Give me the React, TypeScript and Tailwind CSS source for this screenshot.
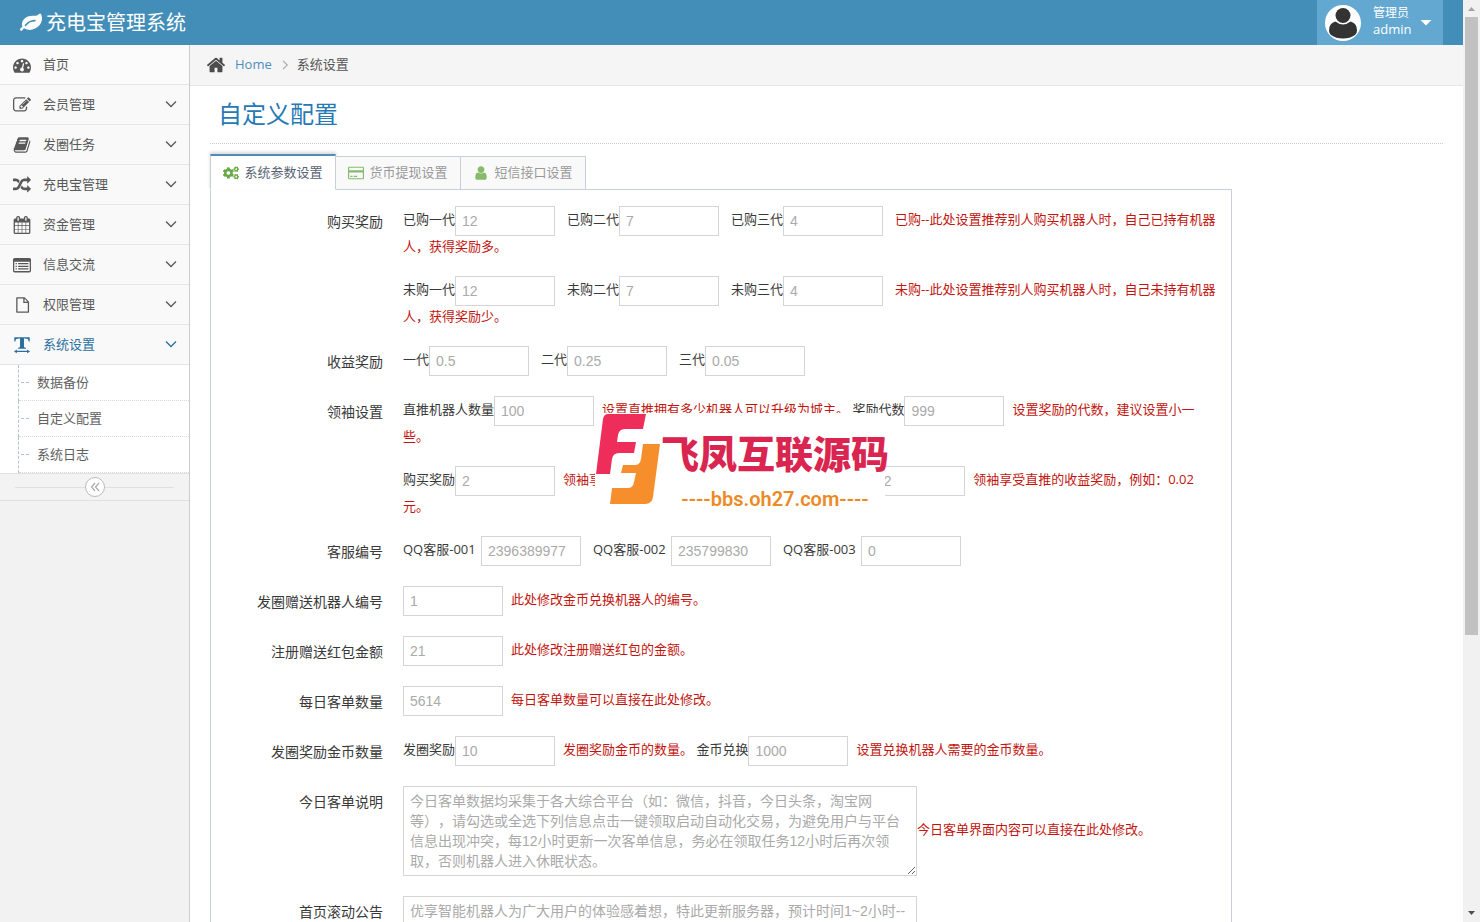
import { useState, type ReactNode } from 'react';
import { FaCogs } from 'react-icons/fa';

const ICONS = {
  dashboard:
    'M384 1152q0-53-37.5-90.5t-90.5-37.5-90.5 37.5-37.5 90.5 37.5 90.5 90.5 37.5 90.5-37.5 37.5-90.5zm192-448q0-53-37.5-90.5t-90.5-37.5-90.5 37.5-37.5 90.5 37.5 90.5 90.5 37.5 90.5-37.5 37.5-90.5zm428 481l101-382q6-26-7.5-48.5t-38.5-29.5-48 6.5-30 39.5l-101 382q-60 5-107 43.5t-63 98.5q-20 77 20 146t117 89 146-20 89-117q16-60-6-117t-72-91zm660-33q0-53-37.5-90.5t-90.5-37.5-90.5 37.5-37.5 90.5 37.5 90.5 90.5 37.5 90.5-37.5 37.5-90.5zm-640-640q0-53-37.5-90.5t-90.5-37.5-90.5 37.5-37.5 90.5 37.5 90.5 90.5 37.5 90.5-37.5 37.5-90.5zm448 192q0-53-37.5-90.5t-90.5-37.5-90.5 37.5-37.5 90.5 37.5 90.5 90.5 37.5 90.5-37.5 37.5-90.5zm320 448q0 261-141 483-19 29-54 29h-1402q-35 0-54-29-141-221-141-483 0-182 71-348t191-286 286-191 348-71 348 71 286 191 191 286 71 348z',
  edit:
    'M888 1184l116-116-152-152-116 116v56h96v96h56zm440-720q-16-16-33 1l-350 350q-17 17-1 33t33-1l350-350q17-17 1-33zm80 594v190q0 119-84.5 203.5t-203.5 84.5h-832q-119 0-203.5-84.5t-84.5-203.5v-832q0-119 84.5-203.5t203.5-84.5h832q63 0 117 25 15 7 18 23 3 17-9 29l-49 49q-14 14-32 8-23-6-45-6h-832q-66 0-113 47t-47 113v832q0 66 47 113t113 47h832q66 0 113-47t47-113v-126q0-13 9-22l64-64q15-15 35-7t20 29zm-96-738l288 288-672 672h-288v-288zm444 132l-92 92-288-288 92-92q28-28 68-28t68 28l152 152q28 28 28 68t-28 68z',
  book:
    'M1703 478q40 57 18 129l-275 906q-19 64-76.5 107.5t-122.5 43.5h-923q-77 0-148.5-53.5t-99.5-131.5q-24-67-2-127 0-4 3-27t4-37q1-8-3-21.5t-3-19.5q2-11 8-21t16.5-23.5 16.5-23.5q23-38 45-91.5t30-91.5q3-10 .5-30t-.5-28q3-11 17-28t17-23q21-36 42-92t25-90q1-9-2.5-32t.5-28q4-13 22-30.5t22-22.5q19-26 42.5-84.5t27.5-96.5q1-8-3-25.5t-2-26.5q2-8 9-18t18-23 17-21q8-12 16.5-30.5t15-35 16-36 19.5-32 26.5-23.5 36-11.5 47.5 5.5l-1 3q38-9 51-9h761q74 0 114 56t18 130l-274 906q-36 119-71.5 153.5t-128.5 34.5h-869q-27 0-38 15-11 16-1 43 24 70 144 70h923q29 0 56-15.5t35-41.5l300-987q7-22 5-57 38 15 59 43zm-1064 2q-4 13 2 22.5t20 9.5h608q13 0 25.5-9.5t16.5-22.5l21-64q4-13-2-22.5t-20-9.5h-608q-13 0-25.5 9.5t-16.5 22.5zm-83 256q-4 13 2 22.5t20 9.5h608q13 0 25.5-9.5t16.5-22.5l21-64q4-13-2-22.5t-20-9.5h-608q-13 0-25.5 9.5t-16.5 22.5z',
  random:
    'M666 481q-60 92-137 273-22-45-37-72.5t-40.5-63.5-51-56.5-63-35-81.5-14.5h-224q-14 0-23-9t-9-23v-192q0-14 9-23t23-9h224q250 0 410 225zm1126 799q0 14-9 23l-320 320q-9 9-23 9-13 0-22.5-9.5t-9.5-22.5v-192q-32 0-85 .5t-81 1-73-1-71-5-64-10.5-63-18.5-58-28.5-59-40-55-53.5-56-69.5q59-93 136-273 22 45 37 72.5t40.5 63.5 51 56.5 63 35 81.5 14.5h256v-192q0-14 9-23t23-9q12 0 24 10l319 319q9 9 9 23zm0-896q0 14-9 23l-320 320q-9 9-23 9-13 0-22.5-9.5t-9.5-22.5v-192h-256q-48 0-87 15t-69 45-51 61.5-45 77.5q-32 62-78 171-29 66-49.5 111t-54 105-64 100-74 83-90 68.5-106.5 42-128 16.5h-224q-14 0-23-9t-9-23v-192q0-14 9-23t23-9h224q48 0 87-15t69-45 51-61.5 45-77.5q32-62 78-171 29-66 49.5-111t54-105 64-100 74-83 90-68.5 106.5-42 128-16.5h256v-192q0-14 9-23t23-9q12 0 24 10l319 319q9 9 9 23z',
  calendar:
    'M192 1664h288v-288h-288v288zm352 0h320v-288h-320v288zm-352-352h288v-320h-288v320zm352 0h320v-320h-320v320zm-352-384h288v-288h-288v288zm736 736h320v-288h-320v288zm-384-736h320v-288h-320v288zm768 736h288v-288h-288v288zm-384-352h320v-320h-320v320zm-352-864v-288q0-13-9.5-22.5t-22.5-9.5h-64q-13 0-22.5 9.5t-9.5 22.5v288q0 13 9.5 22.5t22.5 9.5h64q13 0 22.5-9.5t9.5-22.5zm736 864h288v-320h-288v320zm-384-384h320v-288h-320v288zm384 0h288v-288h-288v288zm32-480v-288q0-13-9.5-22.5t-22.5-9.5h-64q-13 0-22.5 9.5t-9.5 22.5v288q0 13 9.5 22.5t22.5 9.5h64q13 0 22.5-9.5t9.5-22.5zm384-64v1280q0 52-38 90t-90 38h-1408q-52 0-90-38t-38-90v-1280q0-52 38-90t90-38h128v-96q0-66 47-113t113-47h64q66 0 113 47t47 113v96h384v-96q0-66 47-113t113-47h64q66 0 113 47t47 113v96h128q52 0 90 38t38 90z',
  list:
    'M160 192h1472q66 0 113 47t47 113v1120q0 66-47 113t-113 47h-1472q-66 0-113-47t-47-113v-1120q0-66 47-113t113-47zm-32 384v896q0 32 32 32h1472q32 0 32-32v-896zm128 128h128v128h-128zm256 0h1024v128h-1024zm-256 256h128v128h-128zm256 0h1024v128h-1024zm-256 256h128v128h-128zm256 0h1024v128h-1024z',
  file:
    'M384 128h768l448 448v1024q0 64-64 64h-1152q-64 0-64-64v-1408q0-64 64-64zm64 128v1280h1024v-832h-448v-448zm704 28v292h292z',
  textWidth:
    'M128 128h1536v420h-110q-20-210-100-250t-260-40h-100v820q0 80 190 90v100h-776v-100q190-10 190-90v-820h-100q-180 0-260 40t-100 250h-110zM384 1344v124h1024v-124l288 188-288 188v-124h-1024v124l-288-188z',
  leaf:
    'M1280 704q0-26-19-45t-45-19q-172 0-318 49.5t-259.5 134-235.5 219.5q-19 21-19 45 0 26 19 45t45 19q24 0 45-19 27-24 74-71t67-66q137-124 268.5-176t313.5-52q26 0 45-19t19-45zm512-198q0 95-20 193-46 224-184.5 383t-357.5 268q-214 108-438 108-148 0-286-47-15-5-88-42t-96-37q-16 0-39.5 32t-45 70-52.5 70-60 32q-43 0-63.5-17.5t-45.5-59.5q-2-4-6-11t-5.5-10-3-9.5-1.5-13.5q0-35 31-73.5t68-65.5 68-56 31-48q0-4-14-38t-16-44q-9-51-9-104 0-115 43.5-220t119-184.5 170.5-139 204-95.5q55-18 145-25.5t179.5-9 178.5-6 163.5-24 113.5-56.5l29.5-29.5 29.5-28 27-20 36.5-16 43.5-4.5q39 0 70.5 46t47.5 112 24 124 8 96z',
  home:
    'M1472 992v480q0 26-19 45t-45 19h-384v-384h-256v384h-384q-26 0-45-19t-19-45v-480q0-1 .5-3t.5-3l575-474 575 474q1 2 1 6zm223-69l-62 74q-8 9-21 11h-3q-13 0-21-7l-692-577-692 577q-12 8-24 7-13-2-21-11l-62-74q-8-10-7-23.5t11-21.5l719-599q32-26 76-26t76 26l244 204v-195q0-14 9-23t23-9h192q14 0 23 9t9 23v408l219 182q10 8 11 21.5t-7 23.5z',
  card:
    'M128 192h1536q128 0 128 128v1152q0 128-128 128h-1536q-128 0-128-128v-1152q0-128 128-128zm0 128v256h1536v-256zm0 512v640h1536v-640zm128 384h256v128h-256zm384 0h384v128h-384z',
  user:
    'M1536 1399q0 109-62.5 187t-150.5 78h-854q-88 0-150.5-78t-62.5-187q0-85 8.5-160.5t31.5-152 58.5-131 94-89 134.5-34.5q131 128 313 128t313-128q76 0 134.5 34.5t94 89 58.5 131 31.5 152 8.5 160.5zm-256-887q0 159-112.5 271.5t-271.5 112.5-271.5-112.5-112.5-271.5 112.5-271.5 271.5-112.5 271.5 112.5 112.5 271.5z',
};

function Icon({ name, className }: { name: keyof typeof ICONS; className: string }) {
  return (
    <svg viewBox="0 0 1792 1792" className={className} fill="currentColor" fillRule="evenodd" aria-hidden="true">
      <path d={ICONS[name]} />
    </svg>
  );
}

function Chevron({ className }: { className: string }) {
  return (
    <svg viewBox="0 0 12 12" className={className} fill="none" stroke="currentColor" strokeWidth="1.3" aria-hidden="true">
      <path d="M1 2.500l5 5 5-5" />
    </svg>
  );
}

const MENU: { icon: keyof typeof ICONS; label: string }[] = [
  { icon: 'edit', label: '会员管理' },
  { icon: 'book', label: '发圈任务' },
  { icon: 'random', label: '充电宝管理' },
  { icon: 'calendar', label: '资金管理' },
  { icon: 'list', label: '信息交流' },
  { icon: 'file', label: '权限管理' },
];

const SUBMENU = ['数据备份', '自定义配置', '系统日志'];

function Header() {
  return (
    <header className="flex h-[45px] shrink-0 justify-between bg-[#438eb9] pr-5 pl-5 text-white">
      <a href="#" className="flex items-center gap-1 text-xl">
        <Icon name="leaf" className="size-[22px]" />
        充电宝管理系统
      </a>
      <button type="button" className="flex w-[126px] items-center bg-[#62a8d1] pl-2 text-left">
        <svg viewBox="0 0 36 36" className="size-9" aria-hidden="true">
          <circle cx="18" cy="18" r="18" fill="#fff" />
          <circle cx="18" cy="10.500" r="7.500" fill="#333" />
          <path d="M10.500 16.500q7.500 6 15 0q6.500 1.500 6.500 9 0 3-2 4.500-5 3.500-12 3.500t-12-3.500q-2-1.500-2-4.500 0-7.500 6.500-9z" fill="#333" />
        </svg>
        <span className="ml-3 flex w-[39px] flex-col pb-[3px] text-[13px] leading-4">
          <small className="text-xs leading-4">管理员</small>
          admin
        </span>
        <svg viewBox="0 0 12 6" className="ml-2 h-[6px] w-3" fill="#fff" aria-hidden="true">
          <path d="M0.500 0h11l-5.500 5.500z" />
        </svg>
      </button>
    </header>
  );
}

function Sidebar() {
  return (
    <aside className="w-[190px] shrink-0 border-r border-[#ccc] bg-[#f2f2f2] text-[13px] text-[#585858]">
      <nav>
        <a href="#" className="flex h-10 items-center gap-3 border-b border-[#e5e5e5] bg-[#fbfbfb] pl-[13px]">
          <Icon name="dashboard" className="size-[18px]" />
          首页
        </a>
        {MENU.map((item) => (
          <a key={item.label} href="#" className="flex h-10 items-center gap-3 border-b border-[#e5e5e5] bg-[#f9f9f9] pr-3 pl-[13px]">
            <Icon name={item.icon} className="size-[18px]" />
            <span className="flex-1">{item.label}</span>
            <Chevron className="size-3" />
          </a>
        ))}
        <a href="#" className="flex h-10 items-center gap-3 border-b border-[#e5e5e5] bg-[#f9f9f9] pr-3 pl-[13px] text-[#2b6f9f]">
          <Icon name="textWidth" className="size-[18px]" />
          <span className="flex-1">系统设置</span>
          <Chevron className="size-3" />
        </a>
        <ul className="bg-white pl-[18px]">
          {SUBMENU.map((label) => (
            <li key={label} className="border-l border-dashed border-[#b4c4cf]">
              <a href="#" className="flex h-9 items-center gap-2 border-b border-dotted border-[#d5d9dc] pl-[2px] text-[#616161]">
                <span className="w-2 border-t border-dashed border-[#b4c4cf]" />
                {label}
              </a>
            </li>
          ))}
        </ul>
      </nav>
      <div className="flex h-7 items-center border-y border-[#e0e0e0] bg-[#f3f3f3] px-[15px]">
        <span className="flex-1 border-t border-[#e0e0e0]" />
        <button type="button" aria-label="收起菜单" className="flex size-5 items-center justify-center rounded-full border border-[#bbb] bg-white text-[#aaa]">
          <svg viewBox="0 0 10 10" className="size-[10px]" fill="none" stroke="currentColor" strokeWidth="1.2">
            <path d="M5 1L1.500 5 5 9M9 1L5.500 5 9 9" />
          </svg>
        </button>
        <span className="flex-1 border-t border-[#e0e0e0]" />
      </div>
    </aside>
  );
}

function Row({ label, children }: { label?: string; children: ReactNode }) {
  return (
    <div className="mb-5 flex">
      <div className="w-40 shrink-0 pt-[6px] text-right text-sm leading-5">{label}</div>
      <div className="ml-5 flex-1 text-[13px] leading-5">{children}</div>
    </div>
  );
}

function Field({ label, value, name, last }: { label?: string; value: string; name: string; last?: boolean }) {
  return (
    <>
      {label && (
        <label htmlFor={name} className={label.startsWith('QQ') ? 'inline-block w-[78px]' : undefined}>
          {label}
        </label>
      )}
      <input
        id={name}
        type="text"
        aria-label={label ? undefined : name}
        defaultValue={value}
        className={`inline-block h-[30px] w-[100px] border border-[#d5d5d5] bg-white px-[6px] align-middle font-[Liberation_Sans,sans-serif] text-sm text-[#aaa] ${last ? 'mr-2' : 'mr-3'}`}
      />
    </>
  );
}

function Hint({ children }: { children: ReactNode }) {
  return <span className="text-[#c2150f]">{children}</span>;
}

const AREA =
  'block h-[90px] w-[514px] shrink-0 resize border border-[#d5d5d5] bg-white px-[6px] py-1 font-[Liberation_Sans,Noto_Sans_CJK_SC,sans-serif] text-sm leading-5 text-[#aaa] [text-spacing-trim:space-all]';

function ConfigForm() {
  return (
    <form className="border border-[#c5d0dc] pt-4 pr-3 pl-3 text-[#393939]">
      <Row label="购买奖励">
        <Field name="bought1" label="已购一代" value="12" />
        <Field name="bought2" label="已购二代" value="7" />
        <Field name="bought3" label="已购三代" value="4" />
        <Hint>已购--此处设置推荐别人购买机器人时，自己已持有机器人，获得奖励多。</Hint>
      </Row>
      <Row>
        <Field name="unbought1" label="未购一代" value="12" />
        <Field name="unbought2" label="未购二代" value="7" />
        <Field name="unbought3" label="未购三代" value="4" />
        <Hint>未购--此处设置推荐别人购买机器人时，自己未持有机器人，获得奖励少。</Hint>
      </Row>
      <Row label="收益奖励">
        <Field name="income1" label="一代" value="0.5" />
        <Field name="income2" label="二代" value="0.25" />
        <Field name="income3" label="三代" value="0.05" />
      </Row>
      <div className="relative">
        <Row label="领袖设置">
          <Field name="robots" label="直推机器人数量" value="100" last />
          <Hint>设置直推拥有多少机器人可以升级为城主。</Hint>{' '}
          <Field name="levels" label="奖励代数" value="999" last />
          <Hint>设置奖励的代数，建议设置小一些。</Hint>
        </Row>
        <Row>
          <Field name="buyReward" label="购买奖励" value="2" last />
          <Hint>领袖享受直推的购买奖励，例如：0.02元。</Hint>{' '}
          <Field name="incomeReward" label="收益奖励" value="0.2" last />
          <Hint>领袖享受直推的收益奖励，例如：0.02元。</Hint>
        </Row>
        <Stamp />
      </div>
      <Row label="客服编号">
        <Field name="qq1" label="QQ客服-001" value="2396389977" />
        <Field name="qq2" label="QQ客服-002" value="235799830" />
        <Field name="qq3" label="QQ客服-003" value="0" />
      </Row>
      <Row label="发圈赠送机器人编号">
        <Field name="giftRobot" value="1" last />
        <Hint>此处修改金币兑换机器人的编号。</Hint>
      </Row>
      <Row label="注册赠送红包金额">
        <Field name="giftMoney" value="21" last />
        <Hint>此处修改注册赠送红包的金额。</Hint>
      </Row>
      <Row label="每日客单数量">
        <Field name="daily" value="5614" last />
        <Hint>每日客单数量可以直接在此处修改。</Hint>
      </Row>
      <Row label="发圈奖励金币数量">
        <Field name="postReward" label="发圈奖励" value="10" last />
        <Hint>发圈奖励金币的数量。</Hint>{' '}
        <Field name="exchange" label="金币兑换" value="1000" last />
        <Hint>设置兑换机器人需要的金币数量。</Hint>
      </Row>
      <Row label="今日客单说明">
        <div className="flex items-center">
          <textarea
            aria-label="今日客单说明"
            className={AREA}
            defaultValue="今日客单数据均采集于各大综合平台（如：微信，抖音，今日头条，淘宝网等），请勾选或全选下列信息点击一键领取启动自动化交易，为避免用户与平台信息出现冲突，每12小时更新一次客单信息，务必在领取任务12小时后再次领取，否则机器人进入休眠状态。"
          />
          <p className="pb-1">
            <Hint>今日客单界面内容可以直接在此处修改。</Hint>
          </p>
        </div>
      </Row>
      <Row label="首页滚动公告">
        <textarea
          aria-label="首页滚动公告"
          className={AREA}
          defaultValue="优享智能机器人为广大用户的体验感着想，特此更新服务器，预计时间1~2小时--"
        />
      </Row>
    </form>
  );
}

// Site stamp laid over the middle of the form
function Stamp() {
  return (
    <div className="absolute top-[17px] left-[372px] flex h-[100px] w-[290px] bg-white">
      <svg viewBox="0 0 66 94" className="h-[94px] w-[66px] shrink-0" aria-hidden="true">
        <path d="M13 1h38l-3 15H30q-6 0-7 6l-1 7h19l-2 11H24q-6 0-7 6l-2 15H1L8 6q1-5 5-5z" fill="#ee2d5b" />
        <path d="M48 31h17l-7 53q-1 7-8 7H15l2-16h16q5 0 6-6l2-9H26l2-8h12q5 0 6-6z" fill="#f68e2c" />
      </svg>
      <div className="flex flex-1 flex-col items-center">
        <strong className="pt-1 font-[Noto_Sans_CJK_SC,sans-serif] text-[38px] leading-[70px] font-black whitespace-nowrap text-[#d9254f]">
          飞凤互联源码
        </strong>
        <span className="font-[Roboto,sans-serif] text-xl leading-6 font-semibold whitespace-nowrap text-[#ec8a26]">
          ----bbs.oh27.com----
        </span>
      </div>
    </div>
  );
}

const TABS = [
  { label: '系统参数设置', icon: <FaCogs className="size-4" /> },
  { label: '货币提现设置', icon: <Icon name="card" className="size-4" /> },
  { label: '短信接口设置', icon: <Icon name="user" className="size-4" /> },
];

function Tabs() {
  const [active, setActive] = useState(0);
  return (
    <div role="tablist" className="relative z-10 -mb-px flex items-end">
      {TABS.map((tab, i) => (
        <button
          key={tab.label}
          type="button"
          role="tab"
          aria-selected={i === active}
          onClick={() => setActive(i)}
          className={
            i === active
              ? 'flex h-9 w-[126px] items-center justify-center gap-[5px] border border-t-2 border-[#c5d0dc] border-t-[#4c8fbd] border-b-white bg-white text-[13px] text-[#576373] shadow-[0_-2px_3px_0_rgba(0,0,0,0.15)]'
              : 'flex h-[34px] w-[125px] items-center justify-center gap-[5px] border border-l-0 border-[#c5d0dc] bg-[#f9f9f9] text-[13px] text-[#999]'
          }
        >
          <span className={i === active ? 'text-[#69aa46]' : 'text-[#87bb6b]'}>{tab.icon}</span>
          {tab.label}
        </button>
      ))}
    </div>
  );
}

function ScrollRail() {
  return (
    <div className="flex w-[17px] shrink-0 flex-col items-center bg-[#f1f1f1]" aria-hidden="true">
      <svg viewBox="0 0 17 17" className="size-[17px] shrink-0" fill="#a3a3a3">
        <path d="M5 11h7L8.500 7z" />
      </svg>
      <div className="h-[67%] w-[13px] bg-[#c1c1c1]" />
      <svg viewBox="0 0 17 17" className="mt-auto size-[17px] shrink-0" fill="#505050">
        <path d="M5 6h7l-3.500 4z" />
      </svg>
    </div>
  );
}

export default function App() {
  return (
    <div className="flex h-screen overflow-hidden bg-white font-[Open_Sans,Noto_Sans_CJK_SC,sans-serif]">
      <div className="flex min-w-0 flex-1 flex-col">
        <Header />
        <div className="flex min-h-0 flex-1">
          <Sidebar />
          <main className="min-w-0 flex-1 overflow-hidden">
            <nav className="flex h-[41px] items-center border-b border-[#e5e5e5] bg-[#f5f5f5] pl-4 text-[13px] text-[#555]">
              <Icon name="home" className="size-5 text-[#4c4c4c]" />
              <a href="#" className="ml-[9px] text-[#4c8fbd]">Home</a>
              <Chevron className="mr-[6px] ml-[9px] size-[10px] -rotate-90 text-[#a2a6af]" />
              <span>系统设置</span>
            </nav>
            <div className="px-5">
              <h1 className="mb-[10px] h-[58px] border-b border-dotted border-[#ccc] pt-[10px] pl-2 text-2xl leading-9 text-[#2679b5]">
                自定义配置
              </h1>
              <div className="max-w-[1022px]">
                <Tabs />
                <ConfigForm />
              </div>
            </div>
          </main>
        </div>
      </div>
      <ScrollRail />
    </div>
  );
}
